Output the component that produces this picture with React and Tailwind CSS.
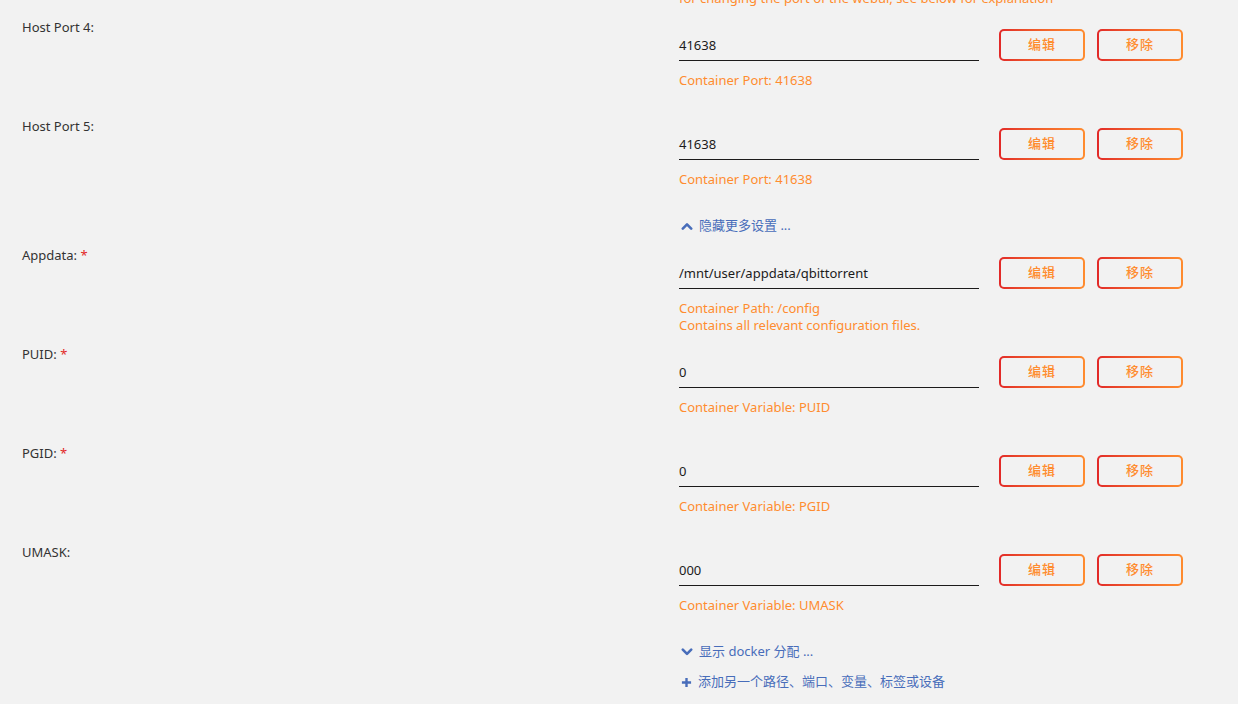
// Docker 模板编辑：端口 / 路径 / 变量的行
const rows = [
  {
    label: 'Host Port 3:',
    value: '8080',
    desc: ['Container Port: 8080', 'for changing the port of the webui, see below for explanation'],
  },
  { label: 'Host Port 4:', value: '41638', desc: ['Container Port: 41638'] },
  { label: 'Host Port 5:', value: '41638', desc: ['Container Port: 41638'] },
  { toggle: 'up', text: '隐藏更多设置 ...' },
  {
    label: 'Appdata:',
    required: true,
    value: '/mnt/user/appdata/qbittorrent',
    desc: ['Container Path: /config', 'Contains all relevant configuration files.'],
  },
  { label: 'PUID:', required: true, value: '0', desc: ['Container Variable: PUID'] },
  { label: 'PGID:', required: true, value: '0', desc: ['Container Variable: PGID'] },
  { label: 'UMASK:', value: '000', desc: ['Container Variable: UMASK'] },
  { toggle: 'down', text: '显示 docker 分配 ...' },
  { toggle: 'plus', text: '添加另一个路径、端口、变量、标签或设备' },
];

function ToggleIcon({ kind }) {
  if (kind === 'plus') {
    return (
      <svg viewBox="0 0 12 12" className="w-[11px] h-[11px]" fill="none" stroke="currentColor" strokeWidth="2.6">
        <path d="M6 1v10M1 6h10" />
      </svg>
    );
  }
  const d = kind === 'up' ? 'M1.8 8.6 6 4.4l4.2 4.2' : 'M1.8 3.6 6 7.8l4.2-4.2';
  return (
    <svg viewBox="0 0 12 12" className="w-[12px] h-[12px]" fill="none" stroke="currentColor" strokeWidth="2.6" strokeLinecap="round" strokeLinejoin="round">
      <path d={d} />
    </svg>
  );
}

function GradientButton({ children }) {
  return (
    <div className="w-[86px] h-[32px] rounded-[5px] p-[2px] bg-linear-to-r from-[#e22828] to-[#ff8c2f]">
      <div className="w-full h-full rounded-[3px] bg-[#f2f2f2] flex items-center justify-center text-[13px] font-medium text-[#ff8c2f] tracking-[1px]">
        {children}
      </div>
    </div>
  );
}

function Toggle({ kind, text }) {
  return (
    <div className="h-[30px] pl-[681px]">
      <div className="flex items-center gap-[6px] h-[18px] text-[13px] text-[#486dba]">
        <ToggleIcon kind={kind} />
        <span>{text}</span>
      </div>
    </div>
  );
}

function Row({ label, required, value, desc }) {
  return (
    <div className="flex h-[99px]">
      <div className="w-[679px] pl-[22px] leading-[16px] text-[13px] text-[#333]">
        {label}
        {required && <span className="text-[#e22828]"> *</span>}
      </div>
      <div className="flex flex-col">
        <div className="mt-[10px] flex items-center">
          <div className="w-[300px] h-[32px] pt-[2px] border-b border-[#1c1b1b] flex items-center text-[13px] text-[#1c1b1b]">
            {value}
          </div>
          <div className="ml-[20px] flex gap-[12px]">
            <GradientButton>编辑</GradientButton>
            <GradientButton>移除</GradientButton>
          </div>
        </div>
        <div className="mt-[11px] text-[13px] leading-[17px] text-[#ff8c2f]">
          {desc.map((d) => (
            <div key={d}>{d}</div>
          ))}
        </div>
      </div>
    </div>
  );
}

export default function App() {
  return (
    <div className="h-[704px] overflow-hidden bg-[#f2f2f2] font-['Noto_Sans','Noto_Sans_CJK_SC',sans-serif]">
      <div className="-mt-[80px]">
        {rows.map((r, i) =>
          r.toggle ? <Toggle key={i} kind={r.toggle} text={r.text} /> : <Row key={i} {...r} />
        )}
      </div>
    </div>
  );
}
